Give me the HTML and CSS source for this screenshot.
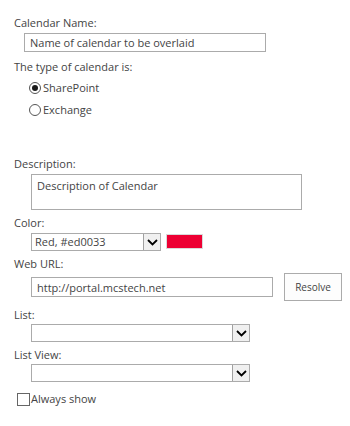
FILE: index.html
```html
<!DOCTYPE html>
<html lang="en">
<head>
    <meta charset="UTF-8">
    <title>Calendar Overlay Settings</title>
    <link rel="stylesheet" href="styles.css">
</head>
<body>
    <div class="form">
        <div class="label first">Calendar Name:</div>
        <input class="text name-input" type="text" value="Name of calendar to be overlaid">

        <div class="label type-label">The type of calendar is:</div>
        <div class="radios">
            <div class="radio-row"><span class="radio checked"></span>SharePoint</div>
            <div class="radio-row"><span class="radio"></span>Exchange</div>
        </div>

        <div class="label desc-label">Description:</div>
        <textarea class="text desc-input">Description of Calendar</textarea>

        <div class="label tight">Color:</div>
        <div class="color-row">
            <div class="select color-select">
                <span class="select-value">Red, #ed0033</span>
                <span class="select-btn">
                    <svg width="11" height="7" viewBox="0 0 11 7"><path d="M1 1l4.5 4.5L10 1" fill="none" stroke="#000" stroke-width="1.8"/></svg>
                </span>
            </div>
            <span class="swatch"></span>
        </div>

        <div class="label tight">Web URL:</div>
        <div class="url-row">
            <input class="text url-input" type="text" value="http://portal.mcstech.net">
            <button class="resolve">Resolve</button>
        </div>

        <div class="label list-label">List:</div>
        <div class="select list-select">
            <span class="select-value"></span>
            <span class="select-btn">
                <svg width="11" height="7" viewBox="0 0 11 7"><path d="M1 1l4.5 4.5L10 1" fill="none" stroke="#000" stroke-width="1.8"/></svg>
            </span>
        </div>

        <div class="label tight">List View:</div>
        <div class="select list-select">
            <span class="select-value"></span>
            <span class="select-btn">
                <svg width="11" height="7" viewBox="0 0 11 7"><path d="M1 1l4.5 4.5L10 1" fill="none" stroke="#000" stroke-width="1.8"/></svg>
            </span>
        </div>

        <div class="check-row"><span class="checkbox"></span>Always show</div>
    </div>
</body>
</html>
```

FILE: styles.css
```css
body {
    margin: 0;
    background: #ffffff;
    font-family: 'Open Sans', 'Noto Sans', sans-serif;
    font-size: 11px;
    color: #444444;
}

.form {
    padding: 15px 0 0 14px;
    display: flex;
    flex-direction: column;
    align-items: flex-start;
}

.label {
    line-height: 16px;
    margin-top: 6px;
}

.label.first {
    margin-top: 0;
}

.label.tight {
    margin-top: 5px;
}

.type-label {
    margin-top: 7px;
}

.desc-label {
    margin-top: 38px;
}

.list-label {
    margin-top: 6px;
}

.text {
    box-sizing: border-box;
    border: 1px solid #ababab;
    font-family: inherit;
    font-size: 11px;
    color: #444444;
    padding: 0 5px;
    margin: 0;
    outline: none;
    background: #ffffff;
}

.name-input {
    width: 242px;
    height: 19px;
    margin: 2px 0 0 10px;
}

.radios {
    display: flex;
    flex-direction: column;
    gap: 6px;
    margin: 5px 0 0 15px;
}

.radio-row,
.check-row {
    display: flex;
    align-items: center;
    line-height: 16px;
    height: 16px;
}

.radio {
    box-sizing: border-box;
    width: 12px;
    height: 12px;
    border: 1px solid #555555;
    border-radius: 50%;
    margin-right: 2px;
    position: relative;
}

.radio.checked::after {
    content: "";
    position: absolute;
    left: 2px;
    top: 2px;
    width: 6px;
    height: 6px;
    border-radius: 50%;
    background: #1a1a1a;
}

.desc-input {
    width: 271px;
    height: 36px;
    margin: 2px 0 0 17px;
    padding: 3px 5px;
    resize: none;
    line-height: 16px;
    overflow: hidden;
}

.color-row {
    display: flex;
    align-items: center;
    margin: 2px 0 0 17px;
}

.select {
    box-sizing: border-box;
    display: flex;
    border: 1px solid #ababab;
    height: 18px;
    background: #ffffff;
}

.select-value {
    flex: 1;
    line-height: 16px;
    padding-left: 3px;
    white-space: nowrap;
    overflow: hidden;
}

.select-btn {
    box-sizing: border-box;
    width: 17px;
    border-left: 1px solid #a0a0a0;
    background: #f0f0f0;
    display: flex;
    align-items: center;
    justify-content: center;
}

.color-select {
    width: 130px;
}

.swatch {
    width: 35px;
    height: 13px;
    background: #ed0033;
    border: 1px solid #d9d9d9;
    margin-left: 5px;
    margin-top: -2px;
}

.url-row {
    display: flex;
    align-items: center;
    margin: 1px 0 0 17px;
}

.url-input {
    width: 242px;
    height: 20px;
}

.resolve {
    box-sizing: border-box;
    width: 58px;
    height: 28px;
    margin-left: 11px;
    border: 1px solid #ababab;
    background: #fdfdfd;
    font-family: inherit;
    font-size: 10px;
    color: #444444;
    padding: 0;
}

.list-select {
    width: 219px;
    margin: 1px 0 0 17px;
}

.check-row {
    margin: 9px 0 0 3px;
}

.checkbox {
    box-sizing: border-box;
    width: 13px;
    height: 13px;
    border: 1px solid #666666;
    margin-right: 1px;
}
```
